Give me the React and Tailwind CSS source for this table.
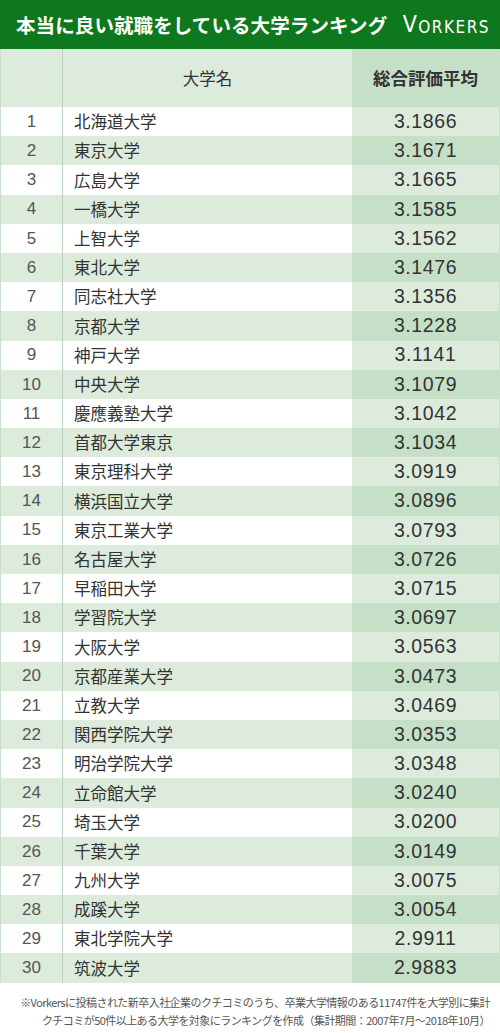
const rows = [
  ["北海道大学", "3.1866"],
  ["東京大学", "3.1671"],
  ["広島大学", "3.1665"],
  ["一橋大学", "3.1585"],
  ["上智大学", "3.1562"],
  ["東北大学", "3.1476"],
  ["同志社大学", "3.1356"],
  ["京都大学", "3.1228"],
  ["神戸大学", "3.1141"],
  ["中央大学", "3.1079"],
  ["慶應義塾大学", "3.1042"],
  ["首都大学東京", "3.1034"],
  ["東京理科大学", "3.0919"],
  ["横浜国立大学", "3.0896"],
  ["東京工業大学", "3.0793"],
  ["名古屋大学", "3.0726"],
  ["早稲田大学", "3.0715"],
  ["学習院大学", "3.0697"],
  ["大阪大学", "3.0563"],
  ["京都産業大学", "3.0473"],
  ["立教大学", "3.0469"],
  ["関西学院大学", "3.0353"],
  ["明治学院大学", "3.0348"],
  ["立命館大学", "3.0240"],
  ["埼玉大学", "3.0200"],
  ["千葉大学", "3.0149"],
  ["九州大学", "3.0075"],
  ["成蹊大学", "3.0054"],
  ["東北学院大学", "2.9911"],
  ["筑波大学", "2.9883"],
];

const App = () => {
  return (
    <div className="w-[500px] h-[1033px] overflow-hidden bg-white text-[#333] font-['Noto_Sans_CJK_JP','Noto_Sans',sans-serif]">
      <header className="h-[49px] bg-[#0d781d] flex items-center justify-between pl-[16px] pr-[10px]">
        <h1 className="text-white text-[19.5px] font-bold tracking-[0.1px]">本当に良い就職をしている大学ランキング</h1>
        <div className="text-white font-['DejaVu_Sans_Condensed','DejaVu_Sans',sans-serif] font-medium tracking-[1.5px] leading-none flex items-end">
          <span className="text-[23px]">V</span>
          <span className="text-[17px]">ORKERS</span>
        </div>
      </header>

      <div className="border-x border-[#c9e0ca]">
        <div className="flex h-[58px] bg-[#dcebdc]">
          <div className="w-[62px] border-r border-[#b9d5bb]" />
          <div className="w-[289px] flex items-center justify-center text-[16.5px]">大学名</div>
          <div className="flex-1 bg-[#c5e0c7] flex items-center justify-center font-bold text-[17.5px]">総合評価平均</div>
        </div>

        {rows.map(([name, score], i) => {
          const even = i % 2 === 1;
          return (
            <div key={name} className={`flex h-[29.2px] items-center ${even ? "bg-[#dcebdc]" : "bg-white"}`}>
              <div className="w-[62px] h-full border-r border-[#b9d5bb] flex items-center justify-center font-['Liberation_Sans',sans-serif] text-[17px] text-[#555]">
                {i + 1}
              </div>
              <div className="w-[289px] pl-[11px] text-[16.5px]">{name}</div>
              <div
                className={`flex-1 h-full flex items-center justify-center font-['Liberation_Sans',sans-serif] text-[19.5px] tracking-[0.6px] ${
                  even ? "bg-[#c5e0c7]" : "bg-[#dcebdc]"
                }`}
              >
                {score}
              </div>
            </div>
          );
        })}
      </div>

      <div className="pt-[10px] pr-[10px] text-right text-[11px] leading-[18px] text-[#555] tracking-[-0.55px] whitespace-nowrap">
        <p>※Vorkersに投稿された新卒入社企業のクチコミのうち、卒業大学情報のある11747件を大学別に集計</p>
        <p>クチコミが50件以上ある大学を対象にランキングを作成（集計期間：2007年7月〜2018年10月）</p>
      </div>
    </div>
  );
};

export default App;
